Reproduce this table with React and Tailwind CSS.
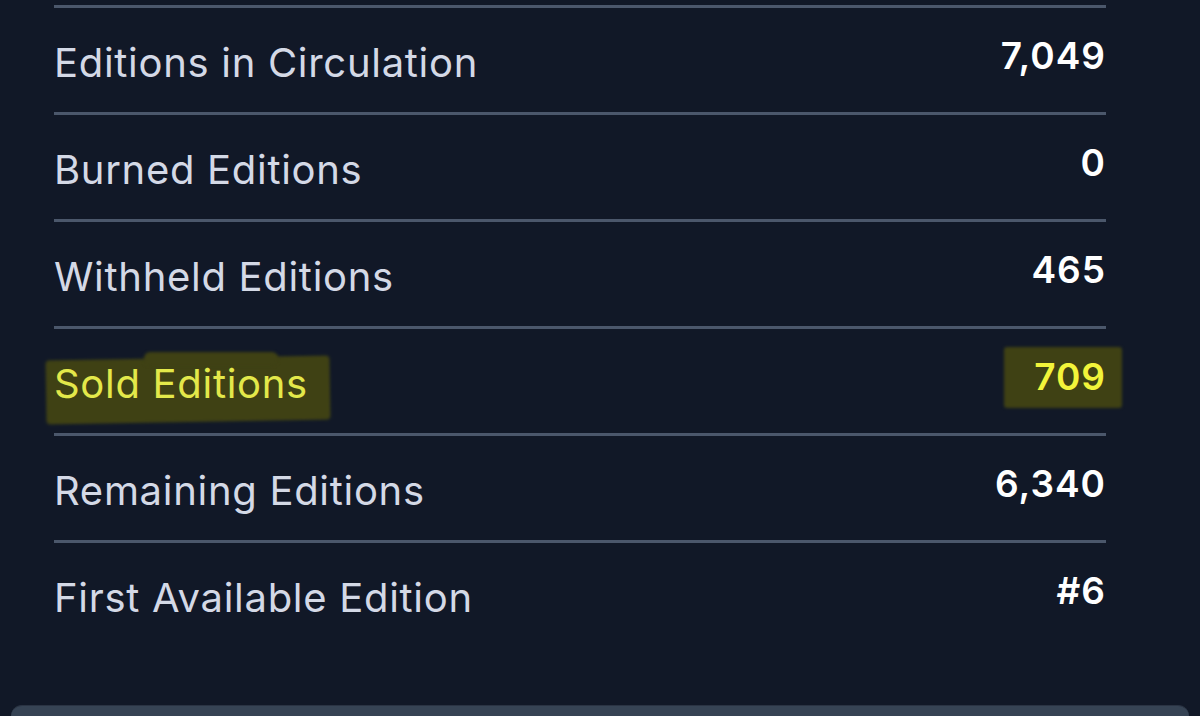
import React from "react";

const rows = [
  { label: "Editions in Circulation", value: "7,049" },
  { label: "Burned Editions", value: "0" },
  { label: "Withheld Editions", value: "465" },
  { label: "Sold Editions", value: "709", hl: true },
  { label: "Remaining Editions", value: "6,340" },
  { label: "First Available Edition", value: "#6" },
];

export default function App() {
  return (
    <div
      className="w-[1200px] h-[716px] bg-[#111827] overflow-hidden flex flex-col"
      style={{ fontFamily: "Inter, 'Noto Sans', sans-serif" }}
    >
      <div className="pl-[54px] pr-[94px] pt-[5px] flex flex-col">
        {rows.map((r) => (
          <div
            key={r.label}
            className="h-[107px] border-t-[3px] border-[#4b576b] flex items-center justify-between"
          >
            <span className="relative text-[40px] tracking-[0.7px] text-[#d4d9e6] mt-[5px]">
              {r.hl && (
                <>
                  <span className="absolute left-[-8px] right-[-22px] top-[4px] bottom-[-8px] bg-[#3f4114] rounded-[4px] -rotate-1 blur-[1.5px]" />
                  <span className="absolute left-[90px] right-[30px] top-[-2px] h-[14px] bg-[#3f4114] rounded-[6px] blur-[1.5px]" />
                </>
              )}
              <span className={r.hl ? "relative text-[#e3e84a]" : "relative"}>{r.label}</span>
            </span>
            <span className="relative text-[37px] font-semibold text-white tracking-[1px] mb-[9px]">
              {r.hl && (
                <span className="absolute left-[-30px] right-[-16px] top-[-2px] bottom-[-4px] bg-[#3f4114] rounded-[3px] blur-[1.5px]" />
              )}
              <span className={r.hl ? "relative text-[#f2f43a]" : "relative"}>{r.value}</span>
            </span>
          </div>
        ))}
      </div>
      <div className="flex-1" />
      <div className="mx-[11px] h-[11px] bg-[#364354] rounded-t-[18px] border-t border-[#2a3343]" />
    </div>
  );
}
